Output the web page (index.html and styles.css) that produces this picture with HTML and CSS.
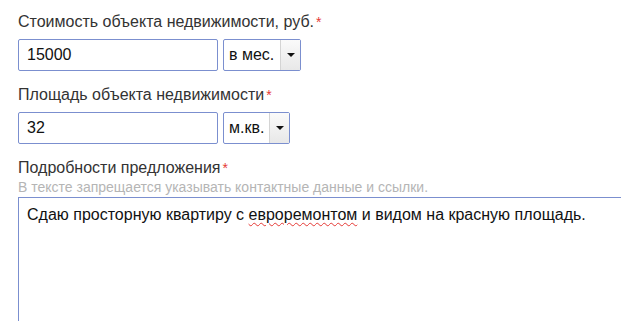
FILE: index.html
```html
<!DOCTYPE html>
<html lang="ru">
<head>
    <meta charset="UTF-8">
    <title>Объявление</title>
    <link rel="stylesheet" href="styles.css">
</head>
<body>
    <form class="ad-form">
        <div class="field">
            <label class="field-label">Стоимость объекта недвижимости, руб.<span class="req">*</span></label>
            <div class="row">
                <input class="text-input" type="text" value="15000">
                <div class="select select-price">
                    <span class="select-value">в мес.</span>
                    <span class="select-btn"><span class="arrow"></span></span>
                </div>
            </div>
        </div>

        <div class="field">
            <label class="field-label">Площадь объекта недвижимости<span class="req">*</span></label>
            <div class="row">
                <input class="text-input" type="text" value="32">
                <div class="select select-area">
                    <span class="select-value">м.кв.</span>
                    <span class="select-btn"><span class="arrow"></span></span>
                </div>
            </div>
        </div>

        <div class="field">
            <label class="field-label">Подробности предложения<span class="req">*</span></label>
            <div class="hint">В тексте запрещается указывать контактные данные и ссылки.</div>
            <div class="textarea">Сдаю просторную квартиру с <span class="typo">евроремонтом</span> и видом на красную площадь.</div>
        </div>
    </form>
</body>
</html>
```

FILE: styles.css
```css
body {
    margin: 0;
    padding: 12px 0 0 18px;
    background: #fff;
    font-family: "Liberation Sans", Arial, sans-serif;
    color: #333;
    overflow: hidden;
}
.field {
    margin-bottom: 14px;
}
.field-label {
    display: block;
    font-size: 16px;
    line-height: 20px;
    color: #333;
    margin-bottom: 7px;
}
.req {
    color: #e53935;
    margin-left: 2px;
    font-size: 14px;
    vertical-align: top;
}
.row {
    display: flex;
    gap: 5px;
}
.text-input {
    width: 200px;
    height: 32px;
    box-sizing: border-box;
    margin: 0;
    padding: 0 8px;
    border: 1px solid #7b8fcf;
    border-radius: 2px;
    font-family: inherit;
    font-size: 16px;
    color: #111;
    outline: none;
}
.select {
    display: flex;
    height: 32px;
    box-sizing: border-box;
    border: 1px solid #7b8fcf;
    border-radius: 2px;
    background: #fff;
}
.select-price {
    width: 78px;
}
.select-area {
    width: 67px;
}
.select-value {
    flex: 1;
    padding-left: 5px;
    line-height: 30px;
    font-size: 16px;
    color: #111;
}
.select-btn {
    width: 19px;
    border-left: 1px solid #d4d4d4;
    background: linear-gradient(#fafafa, #e8e8e8);
    display: flex;
    align-items: center;
    justify-content: center;
}
.arrow {
    width: 0;
    height: 0;
    border-left: 4px solid transparent;
    border-right: 4px solid transparent;
    border-top: 4px solid #111;
}
.hint {
    font-size: 14px;
    line-height: 16px;
    color: #b5b5b5;
    margin-top: -6px;
    margin-bottom: 2px;
}
.textarea {
    width: 640px;
    height: 200px;
    box-sizing: border-box;
    border: 1px solid #7b8fcf;
    padding: 7px 8px;
    font-size: 16px;
    line-height: 20px;
    color: #111;
}
.typo {
    text-decoration: underline wavy #e53935;
    text-decoration-thickness: 1px;
    text-underline-offset: 2px;
}
```
